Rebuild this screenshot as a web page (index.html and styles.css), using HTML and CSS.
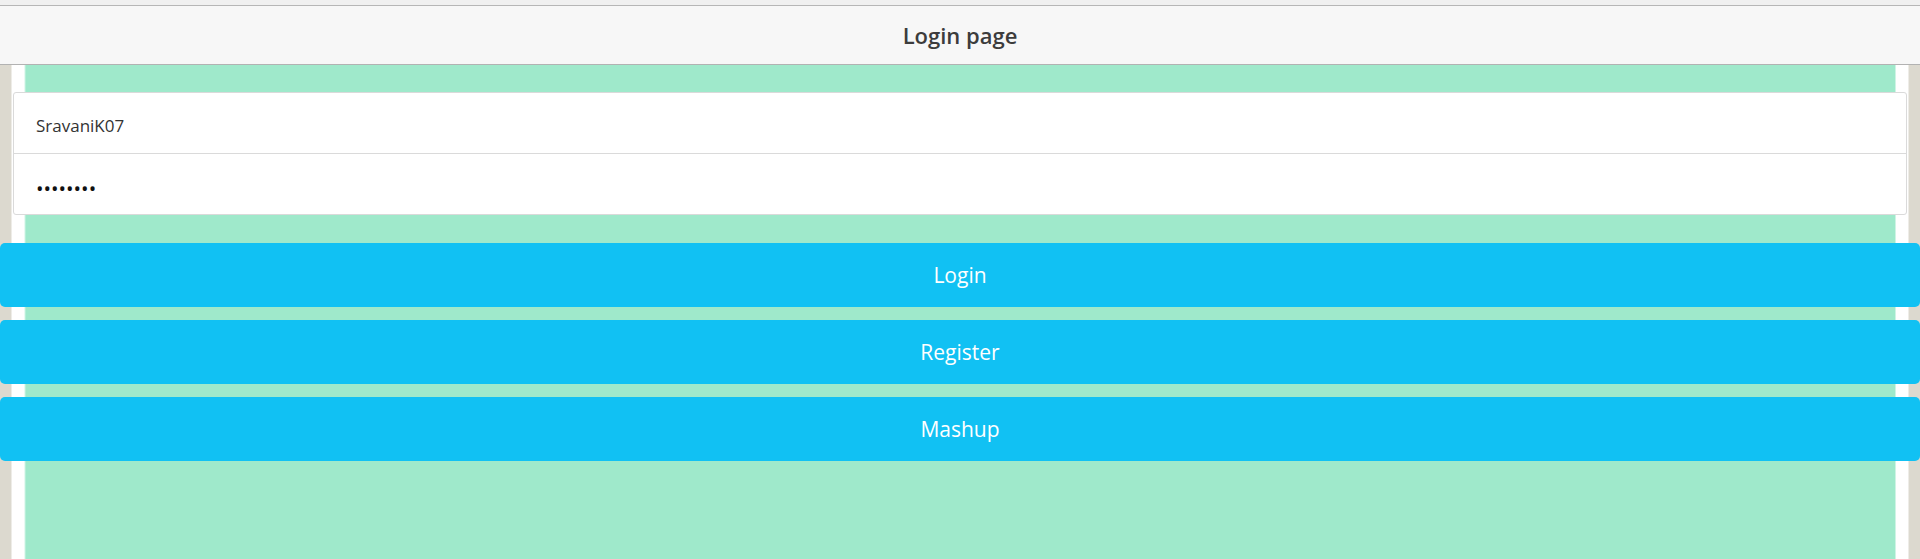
FILE: index.html
```html
<!DOCTYPE html>
<html lang="en">
<head>
<meta charset="utf-8">
<title>Login page</title>
<link rel="stylesheet" href="styles.css">
</head>
<body>
<div class="top-strip"></div>
<header class="bar">
  <h1 class="title">Login page</h1>
</header>
<main class="content">
  <div class="list">
    <label class="item">
      <input class="field" type="text" value="SravaniK07">
    </label>
    <label class="item item-secret">
      <input class="field field-secret" type="password" value="password">
    </label>
  </div>
  <div class="actions">
    <button class="btn" type="button">Login</button>
    <button class="btn" type="button">Register</button>
    <button class="btn" type="button">Mashup</button>
  </div>
</main>
</body>
</html>
```
FILE: styles.css
```css
html, body {
  margin: 0;
  padding: 0;
  height: 100%;
}
body {
  font-family: "Open Sans", "Noto Sans", sans-serif;
  display: flex;
  flex-direction: column;
  overflow: hidden;
  background: #9fe9cb;
}
.top-strip {
  height: 5px;
  background: #f0f0f0;
  border-bottom: 1px solid #b6b6b6;
  flex: none;
}
.bar {
  height: 58px;
  background: #f7f7f7;
  border-bottom: 1px solid #b2b2b2;
  display: flex;
  align-items: center;
  justify-content: center;
  flex: none;
}
.title {
  margin: 0;
  font-size: 22px;
  font-weight: 600;
  color: #3c3c3c;
}
.content {
  flex: 1;
  padding-top: 27px;
  background: linear-gradient(to right,
    #dcd9cf 0, #dcd9cf 11px, #ffffff 12px, #ffffff 24px, #9fe9cb 26px,
    #9fe9cb calc(100% - 25px), #ffffff calc(100% - 24px),
    #ffffff calc(100% - 12px), #dcd9cf calc(100% - 11px), #dcd9cf 100%);
}
.list {
  margin: 0 13px;
  background: #fff;
  border: 1px solid #dadada;
  border-radius: 3px;
  display: flex;
  flex-direction: column;
}
.item {
  box-sizing: border-box;
  display: flex;
  align-items: center;
  height: 60px;
  padding: 5px 22px 0;
}
.item + .item {
  border-top: 1px solid #dadada;
  height: 61px;
}
.item-secret {
  padding-top: 9px;
}
.field {
  flex: 1;
  border: 0;
  outline: none;
  background: transparent;
  font-family: "Open Sans", "Noto Sans", sans-serif;
  font-size: 17px;
  color: #333;
  padding: 0;
  margin: 0;
}
.field-secret {
  font-size: 20px;
  color: #111;
}
.actions {
  margin-top: 28px;
  display: flex;
  flex-direction: column;
  gap: 13px;
}
.btn {
  height: 64px;
  width: 100%;
  border: 0;
  border-radius: 5px;
  background: #11c1f3;
  color: #fff;
  font-family: "Open Sans", "Noto Sans", sans-serif;
  font-size: 21px;
  padding: 0;
  margin: 0;
}
```
